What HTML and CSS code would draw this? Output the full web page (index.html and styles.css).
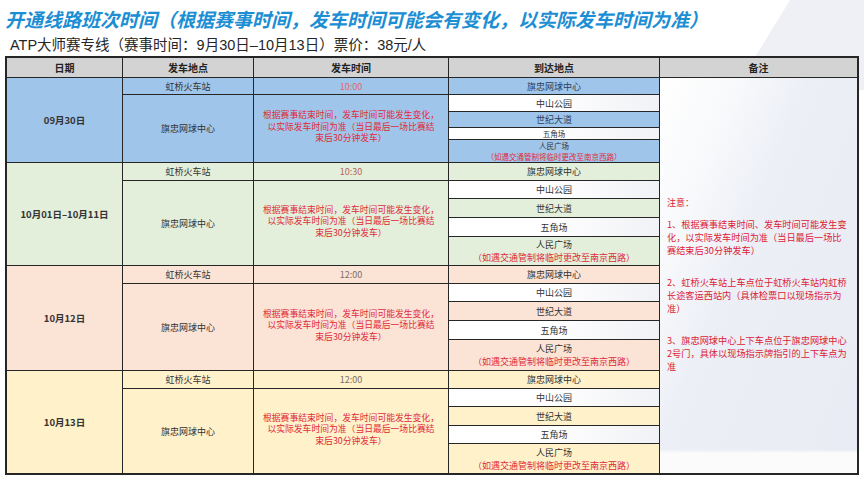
FILE: index.html
```html
<!DOCTYPE html>
<html lang="zh-CN">
<head>
<meta charset="utf-8">
<title>ATP大师赛专线</title>
<link rel="stylesheet" href="styles.css">
</head>
<body>
<svg class="watermark" width="864" height="483" viewBox="0 0 864 483" aria-hidden="true">
  <polygon points="790,0 864,0 864,90 735,90" fill="#eef0f5"/>
</svg>
<div class="page">
  <h1 class="title">开通线路班次时间（根据赛事时间，发车时间可能会有变化，以实际发车时间为准）</h1>
  <p class="subtitle">ATP大师赛专线（赛事时间：9月30日–10月13日）票价：38元/人</p>

  <div class="table">
    <div class="cell th">日期</div>
    <div class="cell th">发车地点</div>
    <div class="cell th">发车时间</div>
    <div class="cell th">到达地点</div>
    <div class="cell th">备注</div>

    <!-- block 1 -->
    <div class="cell date blue span5">09月30日</div>
    <div class="cell blue">虹桥火车站</div>
    <div class="cell blue time t-red">10:00</div>
    <div class="cell blue navy">旗忠网球中心</div>
    <div class="cell remarks">
      <p class="rm-head">注意：</p>
      <p class="rm">1、根据赛事结束时间、发车时间可能发生变<br>化，以实际发车时间为准（当日最后一场比<br>赛结束后30分钟发车）</p>
      <p class="rm">2、虹桥火车站上车点位于虹桥火车站内虹桥<br>长途客运西站内（具体检票口以现场指示为<br>准）</p>
      <p class="rm">3、旗忠网球中心上下车点位于旗忠网球中心<br>2号门，具体以现场指示牌指引的上下车点为<br>准</p>
    </div>
    <div class="cell blue span4">旗忠网球中心</div>
    <div class="cell blue span4 note">根据赛事结束时间，发车时间可能发生变化，<br>以实际发车时间为准（当日最后一场比赛结<br>束后30分钟发车）</div>
    <div class="cell white">中山公园</div>
    <div class="cell blue navy">世纪大道</div>
    <div class="cell white short">五角场</div>
    <div class="cell blue people tight"><span>人民广场</span><span class="red">（如遇交通管制将临时更改至南京西路）</span></div>

    <!-- block 2 -->
    <div class="cell date green span5">10月01日–10月11日</div>
    <div class="cell green">虹桥火车站</div>
    <div class="cell green time t-brown">10:30</div>
    <div class="cell green">旗忠网球中心</div>
    <div class="cell green span4">旗忠网球中心</div>
    <div class="cell green span4 note">根据赛事结束时间，发车时间可能发生变化，<br>以实际发车时间为准（当日最后一场比赛结<br>束后30分钟发车）</div>
    <div class="cell white">中山公园</div>
    <div class="cell green">世纪大道</div>
    <div class="cell white">五角场</div>
    <div class="cell green people"><span>人民广场</span><span class="red">（如遇交通管制将临时更改至南京西路）</span></div>

    <!-- block 3 -->
    <div class="cell date peach span5">10月12日</div>
    <div class="cell peach">虹桥火车站</div>
    <div class="cell peach time t-gray">12:00</div>
    <div class="cell peach">旗忠网球中心</div>
    <div class="cell peach span4">旗忠网球中心</div>
    <div class="cell peach span4 note">根据赛事结束时间，发车时间可能发生变化，<br>以实际发车时间为准（当日最后一场比赛结<br>束后30分钟发车）</div>
    <div class="cell white">中山公园</div>
    <div class="cell peach">世纪大道</div>
    <div class="cell white">五角场</div>
    <div class="cell peach people"><span>人民广场</span><span class="red">（如遇交通管制将临时更改至南京西路）</span></div>

    <!-- block 4 -->
    <div class="cell date yellow span5">10月13日</div>
    <div class="cell yellow">虹桥火车站</div>
    <div class="cell yellow time t-gray">12:00</div>
    <div class="cell yellow">旗忠网球中心</div>
    <div class="cell yellow span4">旗忠网球中心</div>
    <div class="cell yellow span4 note">根据赛事结束时间，发车时间可能发生变化，<br>以实际发车时间为准（当日最后一场比赛结<br>束后30分钟发车）</div>
    <div class="cell white">中山公园</div>
    <div class="cell yellow">世纪大道</div>
    <div class="cell white">五角场</div>
    <div class="cell yellow people"><span>人民广场</span><span class="red">（如遇交通管制将临时更改至南京西路）</span></div>
  </div>
</div>
</body>
</html>
```

FILE: styles.css
```css
html, body {
  margin: 0;
  padding: 0;
  background: #ffffff;
}

body {
  width: 864px;
  height: 483px;
  overflow: hidden;
  position: relative;
  font-family: "Noto Sans CJK SC", "Noto Sans", sans-serif;
  color: #333;
}

.watermark {
  position: absolute;
  left: 0;
  top: 0;
  z-index: 0;
}

.page {
  position: relative;
  z-index: 1;
  padding: 6px 5px 0 5px;
}

.title {
  margin: 0;
  font-size: 19px;
  line-height: 26px;
  font-weight: 700;
  font-style: italic;
  color: #1c8ed3;
  letter-spacing: 0;
}

.subtitle {
  margin: 3px 0 0 5px;
  font-size: 14.5px;
  line-height: 20px;
  color: #262626;
  font-family: "Liberation Sans", "Noto Sans CJK SC", sans-serif;
}

.table {
  margin-top: 1px;
  width: 854px;
  box-sizing: border-box;
  display: grid;
  grid-template-columns: 115px 130px 194px 210px 197px;
  grid-template-rows:
    19px
    16px 16px 15px 11px 22px
    17px 17px 18px 18px 28px
    17px 17px 18px 18px 30px
    17px 17px 18px 17px 29px;
  gap: 1px;
  border: 2px solid #262626;
  background: #262626;
}

.cell {
  display: flex;
  align-items: center;
  justify-content: center;
  text-align: center;
  font-size: 9px;
  line-height: 11px;
  color: #333;
  overflow: hidden;
  white-space: nowrap;
}

.th {
  background: #d3d3d3;
  font-weight: 700;
  font-size: 10px;
  color: #222;
}

.span5 { grid-row: span 5; }
.span4 { grid-row: span 4; }

.date {
  font-weight: 700;
  font-size: 9.5px;
  color: #333;
}

.blue { background: #a0c5ea; }
.green { background: #e3efda; }
.peach { background: #fbe3d6; }
.yellow { background: #fff1ca; }
.white { background: linear-gradient(90deg, #ffffff 45%, #f1f2f6 100%); }

.short { font-size: 7.5px; line-height: 11px; }

.navy { color: #2b3f5f; }

.time { font-size: 9px; }
.t-red { color: #de6a70; }
.t-brown { color: #b8665a; }
.t-gray { color: #7a6f6a; }

.note {
  color: #e02a3b;
  font-size: 8.8px;
  line-height: 11.5px;
  padding-bottom: 4px;
}

.people {
  flex-direction: column;
  line-height: 13px;
}

.people.tight {
  line-height: 11px;
  font-size: 7.5px;
}

.red { color: #e02a3b; }

.remarks {
  grid-row: span 20;
  flex-direction: column;
  align-items: flex-start;
  justify-content: flex-start;
  text-align: left;
  padding: 118px 0 0 7px;
  box-sizing: border-box;
  background:
    linear-gradient(180deg, rgba(255,255,255,0) 94%, #fbfbfc 95%),
    linear-gradient(112deg, #ffffff 0%, #f8f9fb 22%, #eceff6 42%, #e8ebf3 100%);
  color: #e02a3b;
}

.rm-head {
  margin: 0 0 9px 0;
  font-size: 9px;
  line-height: 13px;
  color: #dc2236;
}

.rm {
  margin: 0 0 19px 0;
  font-size: 9.2px;
  line-height: 13px;
  color: #dc2236;
}
```
